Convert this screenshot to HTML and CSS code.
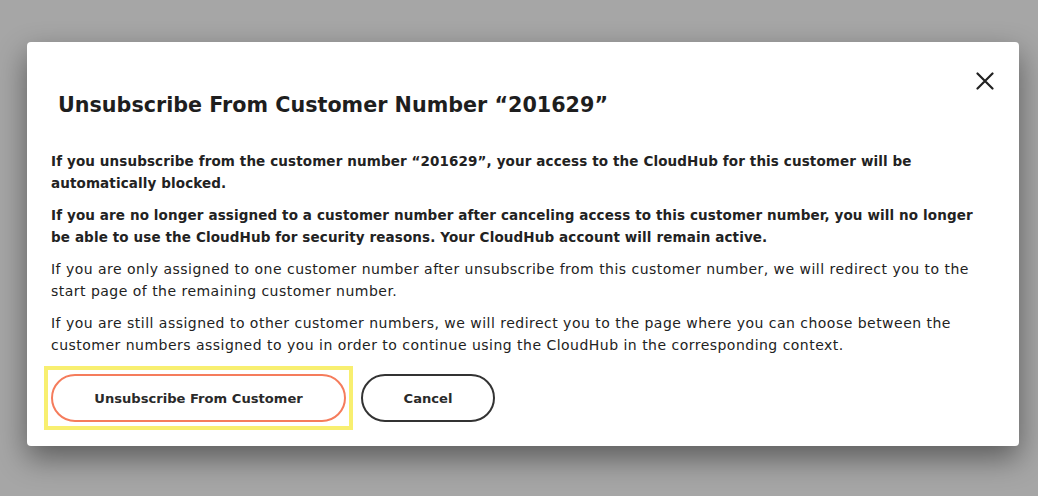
FILE: index.html
```html
<!DOCTYPE html>
<html lang="en">
<head>
<meta charset="utf-8">
<title>Unsubscribe</title>
<link rel="stylesheet" href="styles.css">
</head>
<body>
<div class="overlay">
  <div class="dialog" role="dialog">
    <button class="close" aria-label="Close">
      <svg width="18" height="18" viewBox="0 0 18 18"><path d="M1.5 1.5 L16.5 16.5 M16.5 1.5 L1.5 16.5" stroke="#222" stroke-width="2.2" stroke-linecap="round" fill="none"/></svg>
    </button>
    <h2 class="title">Unsubscribe From Customer Number “201629”</h2>
    <div class="body">
      <p class="strong">If you unsubscribe from the customer number “201629”, your access to the CloudHub for this customer will be automatically blocked.</p>
      <p class="strong">If you are no longer assigned to a customer number after canceling access to this customer number, you will no longer be able to use the CloudHub for security reasons. Your CloudHub account will remain active.</p>
      <p>If you are only assigned to one customer number after unsubscribe from this customer number, we will redirect you to the start page of the remaining customer number.</p>
      <p>If you are still assigned to other customer numbers, we will redirect you to the page where you can choose between the customer numbers assigned to you in order to continue using the CloudHub in the corresponding context.</p>
    </div>
    <div class="actions">
      <span class="highlight"><button class="btn btn-primary">Unsubscribe From Customer</button></span>
      <button class="btn btn-secondary">Cancel</button>
    </div>
  </div>
</div>
</body>
</html>
```
FILE: styles.css
```css
html, body {
  margin: 0;
  padding: 0;
  height: 100%;
}
body {
  background: #a6a6a6;
  font-family: "DejaVu Sans", sans-serif;
  color: #222;
  overflow: hidden;
}
.overlay {
  padding: 42px 19px 0 27px;
}
.dialog {
  position: relative;
  background: #fff;
  border-radius: 4px;
  height: 404px;
  box-sizing: border-box;
  padding: 49px 24px 0 24px;
  box-shadow: 0 12px 30px rgba(0,0,0,0.45);
}
.close {
  position: absolute;
  top: 30px;
  right: 25px;
  background: none;
  border: 0;
  padding: 0;
  width: 18px;
  height: 18px;
  cursor: pointer;
}
.close svg { display: block; }
.title {
  margin: 0 0 0 7px;
  font-size: 20.7px;
  font-weight: bold;
  line-height: 28px;
  color: #1e1e1e;
}
.body {
  margin-top: 31px;
  font-size: 14px;
  line-height: 22px;
  letter-spacing: 0.48px;
}
.body p {
  margin: 0 0 10px 0;
}
.body p.strong {
  font-size: 13.5px;
  font-weight: bold;
  letter-spacing: 0.12px;
}
.actions {
  display: flex;
  align-items: flex-start;
  gap: 16px;
  margin-top: 10px;
  margin-left: -7px;
}
.highlight {
  display: block;
  border: 4px solid #f8ef70;
  padding: 4px 3px 4px 3px;
}
.btn {
  font-family: inherit;
  font-weight: bold;
  font-size: 13.1px;
  color: #2a2a2a;
  background: #fff;
  border-radius: 24px;
  height: 48px;
  border: 2px solid #333;
  cursor: pointer;
  display: block;
}
.btn-primary {
  width: 295px;
  border-color: #f57c5c;
}
.btn-secondary {
  width: 134px;
  margin-top: 8px;
  margin-left: -8px;
}
```
